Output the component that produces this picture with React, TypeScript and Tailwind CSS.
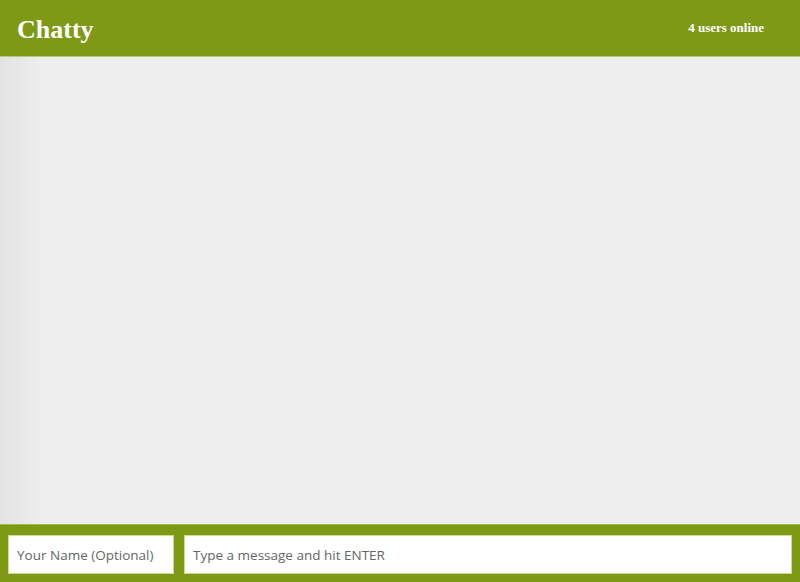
import React, { useState } from "react";

const App: React.FC = () => {
  const [name, setName] = useState("");
  const [message, setMessage] = useState("");

  return (
    <div className="flex h-[582px] w-full flex-col overflow-hidden bg-[#eeeeee]">
      {/* header */}
      <header className="flex h-[57px] shrink-0 items-center justify-between border-b border-[#b5cc6a] bg-[#7e9915] pl-[17px] pr-[36px]">
        <h1 className="pt-[2px] font-['Liberation_Serif',serif] text-[26px] font-bold text-white">
          Chatty
        </h1>
        <span className="font-['Liberation_Serif',serif] text-[13px] font-bold text-white">
          4 users online
        </span>
      </header>

      {/* messages */}
      <main className="flex-1 bg-[linear-gradient(to_right,#e3e3e3_0px,#eeeeee_45px)]"></main>

      {/* footer */}
      <footer className="flex h-[58px] shrink-0 items-center gap-[10px] border-t border-[#a3bb4a] bg-[#7e9915] px-[8px] pt-[2px]">
        <input
          type="text"
          value={name}
          onChange={(e) => setName(e.target.value)}
          placeholder="Your Name (Optional)"
          className="h-[39px] w-[166px] border border-[#c9dc8f] bg-white px-[8px] font-['Open_Sans',sans-serif] text-[13.5px] text-[#555] outline-none placeholder:text-[#666]"
        />
        <input
          type="text"
          value={message}
          onChange={(e) => setMessage(e.target.value)}
          placeholder="Type a message and hit ENTER"
          className="h-[39px] flex-1 border border-[#c9dc8f] bg-white px-[8px] font-['Open_Sans',sans-serif] text-[13.5px] text-[#555] outline-none placeholder:text-[#666]"
        />
      </footer>
    </div>
  );
};

export default App;
